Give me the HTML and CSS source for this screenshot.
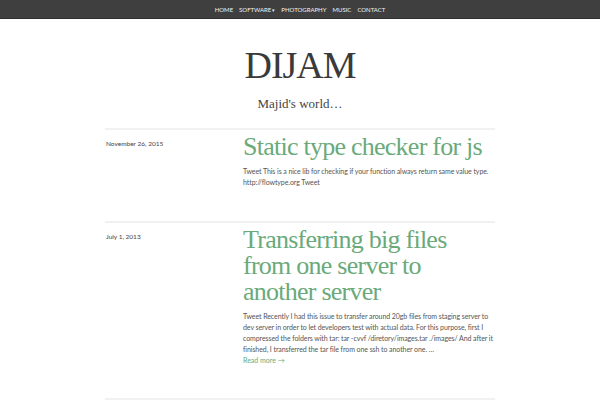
FILE: index.html
```html
<!DOCTYPE html>
<html>
<head>
<meta charset="utf-8">
<link rel="stylesheet" href="styles.css">
</head>
<body>
<nav class="topnav">
  <a>Home</a>
  <a>Software<span class="caret">▾</span></a>
  <a>Photography</a>
  <a>Music</a>
  <a>Contact</a>
</nav>
<header class="site-header">
  <h1 class="site-title">DIJAM</h1>
  <p class="tagline">Majid's world…</p>
</header>
<main class="posts">
  <article class="post">
    <div class="post-date">November 26, 2015</div>
    <div class="post-body">
      <h2 class="post-title">Static type checker for js</h2>
      <p class="excerpt">Tweet This is a nice lib for checking if your function always return same value type. http://flowtype.org Tweet</p>
    </div>
  </article>
  <article class="post">
    <div class="post-date">July 1, 2013</div>
    <div class="post-body">
      <h2 class="post-title">Transferring big files from one server to another server</h2>
      <p class="excerpt">Tweet Recently I had this issue to transfer around 20gb files from staging server to dev server in order to let developers test with actual data. For this purpose, first I compressed the folders with tar: tar -cvvf /diretory/images.tar ./images/ And after it finished, I transferred the tar file from one ssh to another one. …</p>
      <a class="more">Read more →</a>
    </div>
  </article>
  <article class="post"></article>
</main>
</body>
</html>
```
FILE: styles.css
```css
html, body { margin: 0; padding: 0; background: #fff; }
body { font-family: Lato, "Liberation Sans", sans-serif; color: #555; }
.topnav {
  background: #3f3f3f;
  height: 18px;
  display: flex;
  justify-content: center;
  align-items: center;
  gap: 6px;
  border-bottom: 1px solid #2e2e2e;
}
.topnav a {
  color: #f2f2f2;
  text-transform: uppercase;
  font-size: 6px;
}
.caret { font-size: 5px; margin-left: 1px; }
.site-header { text-align: center; padding-top: 24px; }
.site-title {
  margin: 0;
  font-family: "Liberation Serif", serif;
  font-weight: normal;
  font-size: 38px;
  line-height: 44px;
  color: #3a3a3a;
  letter-spacing: -1px;
}
.tagline {
  margin: 9px 0 0;
  font-family: "Liberation Serif", serif;
  font-size: 13px;
  line-height: 16px;
  color: #444;
}
.posts { width: 390px; margin: 16px auto 0; }
.post {
  border-top: 2px solid #f1f1f1;
  display: grid;
  grid-template-columns: 138px 1fr;
  padding: 4px 0 0;
}
.post + .post { margin-top: 33px; }
.post-date {
  font-size: 6.5px;
  color: #444;
  padding: 6px 0 0 1px;
}
.post-title {
  margin: 0;
  font-family: "Liberation Serif", serif;
  font-weight: normal;
  font-size: 26px;
  line-height: 26px;
  letter-spacing: -0.75px;
  color: #6aaa7a;
}
.excerpt {
  margin: 6px 0 0;
  font-size: 7px;
  line-height: 11px;
  letter-spacing: -0.08px;
  color: #555;
}
.more { display: block; font-size: 7px; color: #6aaa7a; line-height: 10px; }
```
